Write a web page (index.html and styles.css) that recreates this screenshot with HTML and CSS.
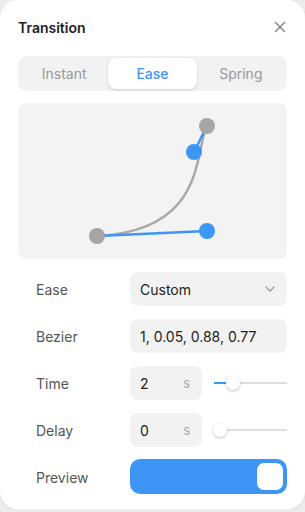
FILE: index.html
```html
<!DOCTYPE html>
<html lang="en">

<head>
    <meta charset="UTF-8">
    <meta name="viewport" content="width=device-width, initial-scale=1.0">
    <title>Transition</title>
    <link rel="stylesheet" href="styles.css">
</head>

<body>
    <div class="panel">
        <div class="panel-header">
            <h2 class="panel-title">Transition</h2>
            <svg class="close-btn" width="12" height="12" viewBox="0 0 12 12">
                <path d="M1.5 1.5 L10.5 10.5 M10.5 1.5 L1.5 10.5" stroke="#8a8a8a" stroke-width="1.6" stroke-linecap="round"/>
            </svg>
        </div>

        <!-- Tabs -->
        <div class="tabs">
            <div class="tab">Instant</div>
            <div class="tab active">Ease</div>
            <div class="tab">Spring</div>
        </div>

        <!-- Curve editor -->
        <div class="curve">
            <svg width="269" height="156" viewBox="0 0 269 156">
                <path d="M79 133 C189 127.5 176 48.5 189 23" fill="none" stroke="#a8a8a8" stroke-width="2.5"/>
                <line x1="79" y1="133" x2="189" y2="128" stroke="#3d96f5" stroke-width="2.5"/>
                <line x1="189" y1="23" x2="176" y2="49" stroke="#3d96f5" stroke-width="2.5"/>
                <circle cx="79" cy="133" r="8" fill="#a6a6a6"/>
                <circle cx="189" cy="23" r="8" fill="#a6a6a6"/>
                <circle cx="176" cy="49" r="8" fill="#3d96f5"/>
                <circle cx="189" cy="128" r="8" fill="#3d96f5"/>
            </svg>
        </div>

        <div class="rows">
            <div class="row">
                <label>Ease</label>
                <div class="field select">
                    <span>Custom</span>
                    <svg width="10" height="6" viewBox="0 0 10 6">
                        <path d="M1 1 L5 5 L9 1" fill="none" stroke="#9a9a9a" stroke-width="1.3" stroke-linecap="round" stroke-linejoin="round"/>
                    </svg>
                </div>
            </div>
            <div class="row">
                <label>Bezier</label>
                <div class="field">1, 0.05, 0.88, 0.77</div>
            </div>
            <div class="row">
                <label>Time</label>
                <div class="field small"><span>2</span><span class="unit">s</span></div>
                <div class="slider">
                    <div class="slider-fill" style="width: 19px"></div>
                    <div class="slider-thumb" style="left: 19px"></div>
                </div>
            </div>
            <div class="row">
                <label>Delay</label>
                <div class="field small"><span>0</span><span class="unit">s</span></div>
                <div class="slider">
                    <div class="slider-fill" style="width: 6px"></div>
                    <div class="slider-thumb" style="left: 6px"></div>
                </div>
            </div>
            <div class="row">
                <label>Preview</label>
                <div class="toggle">
                    <div class="toggle-knob"></div>
                </div>
            </div>
        </div>
    </div>
</body>

</html>
```

FILE: styles.css
```css
body {
    margin: 0;
    background-color: #ededed;
    font-family: Inter, "Noto Sans", sans-serif;
}

.panel {
    background-color: #fff;
    width: 305px;
    height: 509px;
    box-sizing: border-box;
    padding: 0 18px;
    border-radius: 18px;
    box-shadow: 0 1px 4px rgba(0, 0, 0, 0.08);
}

.panel-header {
    height: 56px;
    display: flex;
    align-items: center;
    justify-content: space-between;
    padding-right: 1px;
    box-sizing: border-box;
    padding-bottom: 2px;
}

.panel-title {
    margin: 0;
    font-size: 14px;
    font-weight: 600;
    color: #1e1e1e;
}

/* Tabs */
.tabs {
    display: flex;
    background-color: #f2f2f2;
    border-radius: 9px;
    height: 35px;
    padding: 2px;
    box-sizing: border-box;
}

.tab {
    flex: 1;
    display: flex;
    align-items: center;
    justify-content: center;
    font-size: 14px;
    color: #999;
    border-radius: 8px;
}

.tab.active {
    background-color: #fff;
    color: #3d96f5;
    font-weight: 500;
    box-shadow: 0 1px 3px rgba(0, 0, 0, 0.15);
}

/* Curve */
.curve {
    margin-top: 12px;
    height: 156px;
    background-color: #f3f3f3;
    border-radius: 8px;
}

.curve svg {
    display: block;
}

/* Rows */
.rows {
    margin-top: 13px;
    display: flex;
    flex-direction: column;
    gap: 13px;
}

.row {
    display: flex;
    align-items: center;
    height: 34px;
}

.row label {
    width: 112px;
    box-sizing: border-box;
    padding-left: 18px;
    font-size: 14px;
    color: #555;
}

.field {
    flex: 1;
    height: 34px;
    background-color: #f2f2f2;
    border-radius: 8px;
    display: flex;
    align-items: center;
    justify-content: space-between;
    padding: 0 12px 0 10px;
    box-sizing: border-box;
    font-size: 14px;
    color: #222;
}

.field.small {
    flex: none;
    width: 72px;
}

.unit {
    color: #aaa;
    font-size: 13px;
}

.slider {
    flex: 1;
    position: relative;
    height: 2px;
    background-color: #dedede;
    margin-left: 12px;
}

.slider-fill {
    height: 2px;
    background-color: #3d96f5;
}

.slider-thumb {
    position: absolute;
    top: -6px;
    width: 14px;
    height: 14px;
    margin-left: -7px;
    border-radius: 50%;
    background-color: #fff;
    box-shadow: 0 1px 3px rgba(0, 0, 0, 0.25);
}

.toggle {
    flex: 1;
    height: 35px;
    background-color: #3d96f5;
    border-radius: 10px;
    display: flex;
    align-items: center;
    justify-content: flex-end;
    padding-right: 4px;
    margin-top: -1px;
}

.toggle-knob {
    width: 26px;
    height: 27px;
    background-color: #fff;
    border-radius: 7px;
}
```
